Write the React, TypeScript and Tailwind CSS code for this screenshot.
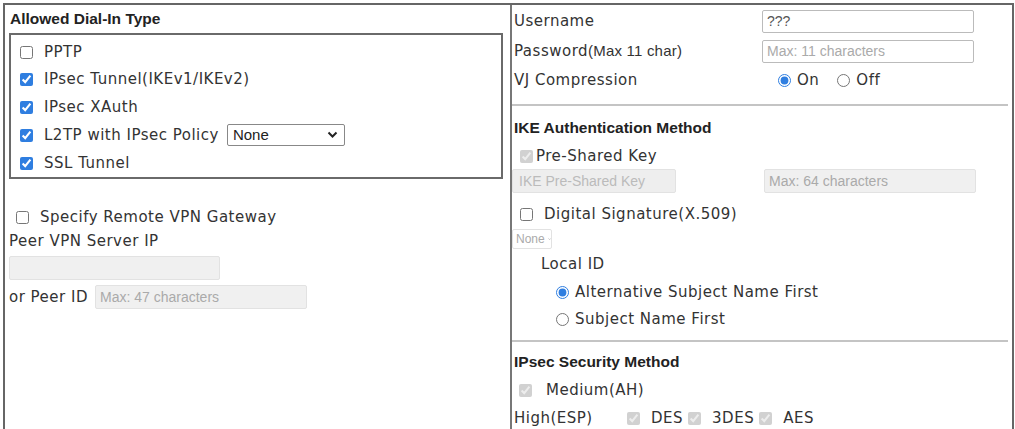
import React from "react";

const label = "font-['DejaVu_Sans',sans-serif] text-[15px] tracking-[0.5px] text-[#333] whitespace-nowrap";
const head = "font-['Liberation_Sans',Arial,sans-serif] text-[15.5px] font-bold text-[#222]";
const box = "h-[23px] border border-[#bbb] rounded-[2px] px-[4px] font-['Liberation_Sans',Arial,sans-serif] text-[14px] outline-none";
const disabledBox = "h-[24px] border border-[#e2e2e2] bg-[#f0f0f0] rounded-[2px] px-[4px] font-['Liberation_Sans',Arial,sans-serif] text-[14px] placeholder:text-[#aaa] outline-none";
const check = "w-[13px] h-[13px] accent-[#2f7ee0] m-0 shrink-0";

function Check({ on, disabled, text, className = "" }: { on?: boolean; disabled?: boolean; text: string; className?: string }) {
  return (
    <label className={`flex shrink-0 items-center gap-[11px] ${className}`}>
      <input type="checkbox" defaultChecked={on} disabled={disabled} className={check} />
      <span className={label}>{text}</span>
    </label>
  );
}

function Radio({ on, text, name }: { on?: boolean; text: string; name: string }) {
  return (
    <label className="flex items-center gap-[6px]">
      <input type="radio" name={name} defaultChecked={on} className="w-[13px] h-[13px] accent-[#2f7ee0] m-0" />
      <span className={label}>{text}</span>
    </label>
  );
}

export default function App() {
  return (
    <div className="w-[1015px] h-[429px] overflow-hidden bg-white pl-[3px] pt-[3px]">
      <div className="w-[1011px] h-[440px] border-t-2 border-x-2 border-[#666] grid grid-cols-[505px_2px_1fr]">
        {/* left column */}
        <div className="flex flex-col">
          <div className={`h-[28px] flex items-center pl-[5px] ${head}`}>Allowed Dial-In Type</div>
          <div className="ml-[4px] w-[494px] h-[146px] border-2 border-[#6a6a6a] pl-[9px] pt-[3px] flex flex-col">
            <Check text="PPTP" className="h-[28px]" />
            <Check on text="IPsec Tunnel(IKEv1/IKEv2)" className="h-[27px]" />
            <Check on text="IPsec XAuth" className="h-[28px]" />
            <div className="h-[28px] shrink-0 flex items-center gap-[8px]">
              <Check on text="L2TP with IPsec Policy" />
              <div className="w-[118px] h-[22px] border border-[#888] rounded-[2px] flex items-center justify-between pl-[5px] pr-[6px]">
                <span className="font-['Liberation_Sans',Arial,sans-serif] text-[15px] text-[#222]">None</span>
                <svg width="11" height="8" viewBox="0 0 11 8"><path d="M1.5 1.5 5.5 5.5 9.5 1.5" fill="none" stroke="#222" strokeWidth="2" /></svg>
              </div>
            </div>
            <Check on text="SSL Tunnel" className="h-[28px]" />
          </div>
          <div className="h-[26px]" />
          <Check text="Specify Remote VPN Gateway" className="h-[24px] pl-[11px] gap-[11px]" />
          <div className={`h-[24px] flex items-center pl-[4px] ${label}`}>Peer VPN Server IP</div>
          <div className="h-[30px] flex items-center pl-[4px]">
            <input disabled className={`${disabledBox} w-[211px]`} />
          </div>
          <div className="h-[28px] flex items-center pl-[4px] gap-[7px]">
            <span className={label}>or Peer ID</span>
            <input disabled placeholder="Max: 47 characters" className={`${disabledBox} w-[212px]`} />
          </div>
        </div>

        <div className="bg-[#777]" />

        {/* right column */}
        <div className="flex flex-col pr-[4px]">
          <div className="h-[30px] mt-[1px] flex items-center">
            <span className={`${label} w-[250px] pl-[2px]`}>Username</span>
            <input defaultValue="???" className={`${box} w-[212px] text-[#555]`} />
          </div>
          <div className="h-[30px] flex items-center">
            <span className={`${label} w-[250px] pl-[2px]`}>
              Password<span className="font-['Liberation_Sans',Arial,sans-serif] text-[15px] tracking-[0.2px]">(Max 11 char)</span>
            </span>
            <input placeholder="Max: 11 characters" className={`${box} w-[212px] placeholder:text-[#aaa]`} />
          </div>
          <div className="h-[29px] flex items-center">
            <span className={`${label} w-[266px] pl-[2px]`}>VJ Compression</span>
            <div className="flex items-center gap-[18px]">
              <Radio on name="vj" text="On" />
              <Radio name="vj" text="Off" />
            </div>
          </div>
          <div className="mt-[9px] h-[2px] bg-[#c4c4c4]" />
          <div className={`h-[39px] flex items-end pb-[6px] pl-[2px] ${head}`}>IKE Authentication Method</div>
          <label className="h-[22px] flex items-center gap-[3px] pl-[8px]">
            <input type="checkbox" defaultChecked disabled className={check} />
            <span className={label}>Pre-Shared Key</span>
          </label>
          <div className="h-[28px] flex items-center">
            <button disabled className="w-[164px] h-[24px] border border-[#e2e2e2] bg-[#eee] rounded-[2px] text-left pl-[6px] font-['Liberation_Sans',Arial,sans-serif] text-[14px] text-[#bbb]">IKE Pre-Shared Key</button>
            <input disabled placeholder="Max: 64 characters" className={`${disabledBox} w-[212px] ml-[88px]`} />
          </div>
          <Check text="Digital Signature(X.509)" className="h-[34px] pt-[4px] pl-[8px] gap-[10px]" />
          <div className="h-[20px] flex items-center">
            <div className="w-[40px] h-[20px] border border-[#e2e2e2] rounded-[2px] flex items-center gap-[3px] pl-[3px] text-[#aaa]">
              <span className="font-['Liberation_Sans',Arial,sans-serif] text-[12px]">None</span>
              <svg width="8" height="6" viewBox="0 0 8 6"><path d="M1 1.5 4 4.5 7 1.5" fill="none" stroke="#aaa" strokeWidth="1.5" /></svg>
            </div>
          </div>
          <div className={`h-[30px] flex items-center pl-[29px] ${label}`}>Local ID</div>
          <div className="h-[26px] flex items-center pl-[44px]">
            <Radio on name="lid" text="Alternative Subject Name First" />
          </div>
          <div className="h-[28px] flex items-center pl-[44px]">
            <Radio name="lid" text="Subject Name First" />
          </div>
          <div className="mt-[7px] h-[2px] bg-[#c4c4c4]" />
          <div className={`h-[34px] flex items-end pb-[3px] pl-[2px] ${head}`}>IPsec Security Method</div>
          <Check on disabled text="Medium(AH)" className="h-[28px] pl-[7px] gap-[14px]" />
          <div className="h-[28px] flex items-center">
            <span className={`${label} w-[115px] pl-[2px]`}>High(ESP)</span>
            <div className="flex items-center gap-[5px]">
              <Check on disabled text="DES" className="gap-[9px]" />
              <Check on disabled text="3DES" className="gap-[9px]" />
              <Check on disabled text="AES" className="gap-[9px]" />
            </div>
          </div>
        </div>
      </div>
    </div>
  );
}
